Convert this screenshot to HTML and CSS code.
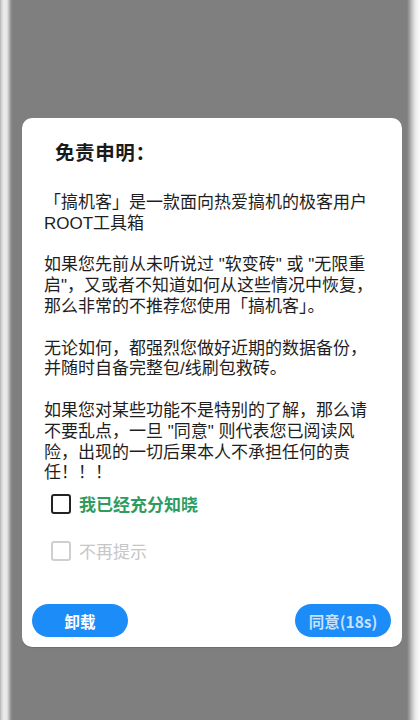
FILE: index.html
```html
<!DOCTYPE html>
<html lang="zh-CN">
<head>
<meta charset="utf-8">
<title>免责申明</title>
<link rel="stylesheet" href="styles.css">
</head>
<body>
<div class="screen">
  <div class="dialog">
    <h1 class="title">免责申明：</h1>
    <div class="content">
      <p>「搞机客」是一款面向热爱搞机的极客用户<br>ROOT工具箱</p>
      <p>如果您先前从未听说过 "软变砖" 或 "无限重<br>启"，又或者不知道如何从这些情况中恢复，<br>那么非常的不推荐您使用「搞机客」。</p>
      <p>无论如何，都强烈您做好近期的数据备份，<br>并随时自备完整包/线刷包救砖。</p>
      <p>如果您对某些功能不是特别的了解，那么请<br>不要乱点，一旦 "同意" 则代表您已阅读风<br>险，出现的一切后果本人不承担任何的责<br>任！！！</p>
    </div>
    <label class="check check-known">
      <span class="box"></span>
      <span class="check-text">我已经充分知晓</span>
    </label>
    <label class="check check-disabled">
      <span class="box"></span>
      <span class="check-text">不再提示</span>
    </label>
    <div class="actions">
      <button class="btn btn-uninstall">卸载</button>
      <button class="btn btn-agree">同意(18s)</button>
    </div>
  </div>
</div>
</body>
</html>
```

FILE: styles.css
```css
html, body {
  margin: 0;
  padding: 0;
}

body {
  width: 420px;
  height: 720px;
  overflow: hidden;
  font-family: "Noto Sans CJK SC", "Noto Sans", sans-serif;
  background: linear-gradient(to right,
    #b4b4b4 0px,
    #d8d8d8 2px,
    #ececec 4px,
    #e6e6e6 7px,
    #bcbcbc 9px,
    #8c8c8c 11px,
    #7f7f7f 13px,
    #7f7f7f 407px,
    #989898 409px,
    #c4c4c4 412px,
    #e6e6e6 415px,
    #f6f6f6 418px,
    #fbfbfb 420px);
}

.screen {
  width: 420px;
  height: 720px;
  padding-top: 118px;
  box-sizing: border-box;
}

.dialog {
  margin-left: 22px;
  width: 380px;
  height: 529px;
  box-sizing: border-box;
  background: #ffffff;
  border-radius: 10px;
  box-shadow: 0 1px 1px rgba(0, 0, 0, 0.15);
  padding: 22px 11px 10px 10px;
  display: flex;
  flex-direction: column;
}

.title {
  margin: 0 0 0 23px;
  font-size: 19.5px;
  line-height: 24px;
  font-weight: 700;
  color: #1a1a1a;
  letter-spacing: 0.6px;
}

.content {
  margin: 29px 0 0 12px;
  font-family: "Liberation Sans", "Noto Sans CJK SC", sans-serif;
  font-size: 17px;
  line-height: 20.8px;
  color: #1e1e1e;
  white-space: nowrap;
}

.content p {
  margin: 0 0 20.8px 0;
}

.content p:last-child {
  margin-bottom: 0;
}

.check {
  display: flex;
  align-items: center;
  gap: 8px;
  height: 24px;
  margin-left: 19px;
  font-size: 17px;
  line-height: 24px;
}

.check-known {
  margin-top: 8px;
}

.check-disabled {
  margin-top: 23px;
}

.box {
  width: 16px;
  height: 16px;
  border: 2px solid #222222;
  border-radius: 3px;
  flex: none;
}

.check-known .check-text {
  color: #2e9c5f;
  font-weight: 700;
}

.check-disabled .box {
  border-color: #cfcfcf;
}

.check-disabled .check-text {
  color: #c6c6c6;
}

.actions {
  margin-top: auto;
  display: flex;
  justify-content: space-between;
}

.btn {
  width: 96px;
  height: 33px;
  border: none;
  border-radius: 17px;
  background: #1b8cf8;
  font-family: "Noto Sans CJK SC", "Noto Sans", sans-serif;
  font-size: 15.5px;
  font-weight: 700;
  padding: 0;
  color: #ffffff;
}

.btn-agree {
  color: rgba(255, 255, 255, 0.75);
}
```
